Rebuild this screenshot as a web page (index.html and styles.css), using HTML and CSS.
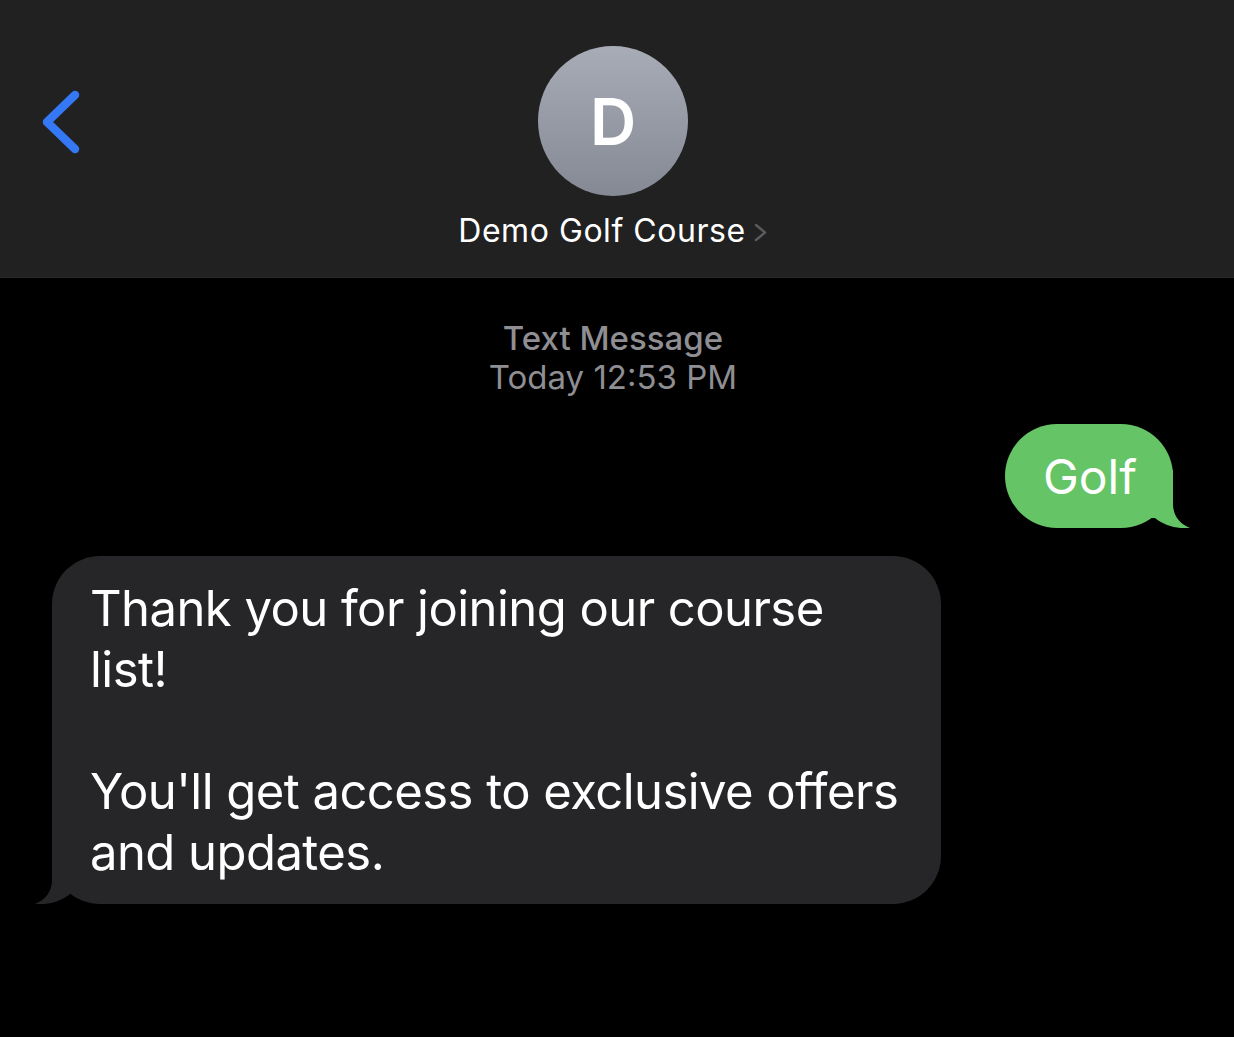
FILE: index.html
```html
<!DOCTYPE html>
<html lang="en">
<head>
    <meta charset="UTF-8">
    <meta name="viewport" content="width=device-width, initial-scale=1.0">
    <title>Demo Golf Course</title>
    <link rel="stylesheet" href="styles.css">
</head>
<body>
    <div class="top-bar">
        <div class="back">
            <svg width="44" height="70" viewBox="0 0 44 70">
                <path d="M34 5 L6 32 L34 59" fill="none" stroke="#3478f6" stroke-width="8.5" stroke-linecap="round" stroke-linejoin="round"/>
            </svg>
        </div>

        <div class="contact">
            <div class="avatar">D</div>
            <div class="contact-name">
                Demo Golf Course
                <svg width="15" height="21" viewBox="0 0 15 21">
                    <path d="M3 3 L12 10.5 L3 18" fill="none" stroke="#5b5b5f" stroke-width="2.4" stroke-linecap="round" stroke-linejoin="round"/>
                </svg>
            </div>
        </div>

        <div class="spacer"></div>
    </div>

    <div class="thread">
        <div class="stamp">
            <div class="stamp-kind">Text Message</div>
            <div class="stamp-time">Today 12:53 PM</div>
        </div>

        <!-- sent -->
        <div class="row row-sent">
            <div class="bubble sent">
                Golf
                <svg class="tail tail-sent" width="50" height="58" viewBox="0 0 50 58">
                    <path d="M10 0 H33 V34 C33 46 40 54 50 58 C37 59 25 56 15 48 L10 48 Z" fill="#65c466"/>
                </svg>
            </div>
        </div>

        <!-- received -->
        <div class="row">
            <div class="bubble received">
                Thank you for joining our course<br>
                list!<br>
                <br>
                You'll get access to exclusive offers<br>
                and updates.
                <svg class="tail tail-received" width="50" height="58" viewBox="0 0 50 58">
                    <path d="M40 0 H17 V34 C17 46 10 54 0 58 C13 59 25 56 35 48 L40 48 Z" fill="#262628"/>
                </svg>
            </div>
        </div>
    </div>
</body>
</html>
```

FILE: styles.css
```css
body, html {
    margin: 0;
    padding: 0;
    font-family: Inter, "Noto Sans", sans-serif;
    background-color: #000;
    color: #fff;
    overflow: hidden;
}

.top-bar {
    height: 278px;
    box-sizing: border-box;
    background-color: #212121;
    border-bottom: 1px solid #2a2a2a;
    display: grid;
    grid-template-columns: 1fr auto 1fr;
    padding: 46px 8px 0 0;
}

.back {
    padding-left: 41px;
    padding-top: 44px;
}

.back svg {
    display: block;
}

.contact {
    display: flex;
    flex-direction: column;
    align-items: center;
}

.avatar {
    width: 150px;
    height: 150px;
    border-radius: 50%;
    background: linear-gradient(180deg, #a8acb7, #858994);
    display: flex;
    align-items: center;
    justify-content: center;
    font-size: 64px;
    font-weight: 600;
    color: #fff;
}

.contact-name {
    margin-top: 17px;
    font-size: 32px;
    line-height: 36px;
    letter-spacing: 0.55px;
    display: flex;
    align-items: center;
    gap: 7px;
}

.contact-name svg {
    margin-top: 2px;
}

.thread {
    padding: 41px 60px 0 52px;
}

.stamp {
    text-align: center;
    color: #8e8e93;
    font-size: 33px;
    line-height: 39px;
}

.stamp-kind {
    font-weight: 500;
}

.row {
    display: flex;
    margin-top: 28px;
}

.row-sent {
    justify-content: flex-end;
    margin-top: 27px;
    padding-right: 1px;
}

.bubble {
    position: relative;
    font-size: 49px;
    line-height: 61px;
    padding: 22px 38px 21px;
    white-space: nowrap;
}

.sent {
    background-color: #65c466;
    border-radius: 52px;
    font-size: 48px;
    padding-right: 36px;
}

.received {
    background-color: #262628;
    border-radius: 48px;
    width: 889px;
    box-sizing: border-box;
    letter-spacing: -0.55px;
}

.tail {
    position: absolute;
    bottom: 0;
}

.tail-sent {
    right: -17px;
}

.tail-received {
    left: -17px;
}
```
